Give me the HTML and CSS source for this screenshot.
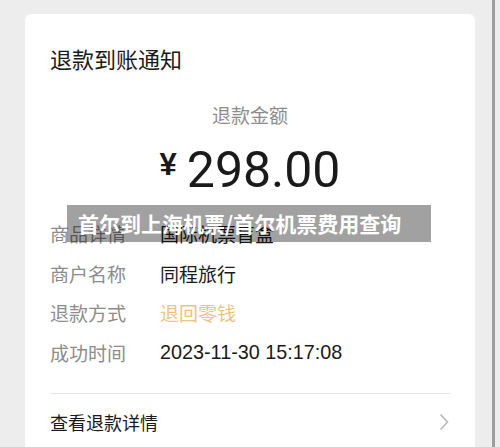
FILE: index.html
```html
<!DOCTYPE html>
<html lang="zh-CN">
<head>
  <meta charset="UTF-8">
  <meta name="viewport" content="width=device-width, initial-scale=1.0">
  <title>退款到账通知</title>
  <link rel="stylesheet" href="styles.css">
</head>
<body>
  <div class="page">
    <div class="card">
      <div class="title">退款到账通知</div>
      <div class="amount-label">退款金额</div>
      <div class="amount">
        <span class="currency">¥</span>
        <span class="value">298.00</span>
      </div>
      <div class="rows">
        <div class="row">
          <span class="label">商品详情</span>
          <span class="text">国际机票盲盒</span>
        </div>
        <div class="row">
          <span class="label">商户名称</span>
          <span class="text">同程旅行</span>
        </div>
        <div class="row">
          <span class="label">退款方式</span>
          <span class="text gold">退回零钱</span>
        </div>
        <div class="row">
          <span class="label">成功时间</span>
          <span class="text num">2023-11-30 15:17:08</span>
        </div>
      </div>
      <div class="footer">
        <span>查看退款详情</span>
        <svg class="chevron" width="10" height="18" viewBox="0 0 10 18">
          <path d="M1.5 1.5 L8.5 9 L1.5 16.5" fill="none" stroke="#b8b8b8" stroke-width="1.6"/>
        </svg>
      </div>
    </div>
    <div class="scrollbar"></div>
  </div>
  <div class="banner">首尔到上海机票/首尔机票费用查询</div>
</body>
</html>
```

FILE: styles.css
```css
body {
  margin: 0;
  background-color: #ededed;
  font-family: "Noto Sans CJK SC", "Noto Sans", sans-serif;
  color: #1a1a1a;
  width: 500px;
  height: 447px;
  overflow: hidden;
  position: relative;
}
.page {
  display: flex;
  padding: 14px 0 0 25px;
  height: 433px;
}
.card {
  width: 400px;
  height: 433px;
  overflow: hidden;
  background-color: #fff;
  border-radius: 6px 6px 0 0;
  padding: 0 25px;
  flex-shrink: 0;
}
.scrollbar {
  width: 3px;
  margin-left: 17px;
  margin-top: -14px;
  height: 447px;
  background-color: #9e9e9e;
}
.title {
  margin-top: 30px;
  font-size: 22px;
  line-height: 28px;
}
.amount-label {
  margin-top: 29px;
  font-size: 19px;
  line-height: 28px;
  text-align: center;
  color: #8c8c8c;
}
.amount {
  margin-top: 11px;
  height: 60px;
  display: flex;
  justify-content: center;
  align-items: flex-start;
  gap: 10px;
}
.currency {
  font-family: "Liberation Sans", sans-serif;
  font-weight: bold;
  font-size: 31px;
  line-height: 31px;
  margin-top: 9px;
}
.value {
  font-family: Roboto, sans-serif;
  font-size: 50px;
  line-height: 60px;
}
.rows {
  margin-top: 14px;
}
.row {
  display: flex;
  align-items: center;
  height: 39.5px;
  font-size: 19px;
}
.label {
  width: 110px;
  color: #8c8c8c;
}
.gold {
  color: #edc380;
}
.num {
  font-family: "Liberation Sans", sans-serif;
  font-size: 19.8px;
}
.footer {
  margin-top: 21px;
  border-top: 1px solid #e6e6e6;
  height: 56px;
  display: flex;
  align-items: center;
  justify-content: space-between;
  font-size: 18px;
}
.chevron {
  margin-right: 1px;
}
.banner {
  position: absolute;
  left: 67px;
  top: 205px;
  width: 353px;
  height: 37px;
  padding-left: 11px;
  background-color: rgba(0, 0, 0, 0.37);
  color: #fff;
  font-weight: bold;
  font-size: 21px;
  line-height: 37px;
  white-space: nowrap;
}
```
